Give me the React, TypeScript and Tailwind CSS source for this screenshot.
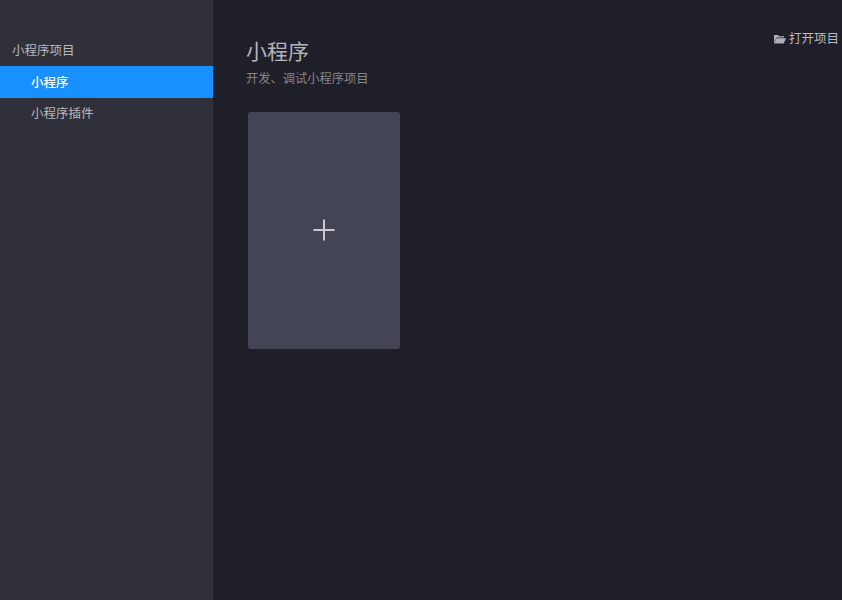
const fontStack = "font-['Liberation_Sans','Noto_Sans_CJK_SC',sans-serif]";

function FolderIcon() {
  return (
    <svg className="w-3 h-3 mr-[3px]" viewBox="0 0 12 12" fill="#b0b0b8">
      <path d="M0 2h4l1 1.200h5v1.300h-7.500l-2.500 5.500z" />
      <path d="M2.500 5.300h9.500l-2.300 5.200h-9.700z" />
    </svg>
  );
}

function App() {
  return (
    <div className={`flex w-[842px] h-[600px] overflow-hidden bg-[#1f1f29] ${fontStack}`}>
      <aside className="w-[213px] h-full shrink-0 bg-[#30303b] pt-[35px]">
        <div className="h-[31px] pl-3 pt-[2px] flex items-center text-[12.500px] text-[#b8b8bd]">小程序项目</div>
        <div className="h-8 pl-[31px] pt-[2px] flex items-center text-[12.500px] font-medium text-white bg-[#1890ff]">小程序</div>
        <div className="h-8 pl-[31px] flex items-center text-[12.500px] text-[#b8b8bd]">小程序插件</div>
      </aside>
      <main className="relative flex-1 pl-[33px] pt-[39px]">
        <button className="absolute top-[31px] right-[3px] flex items-center text-[12.500px] leading-4 text-[#b8b8be]">
          <FolderIcon />
          打开项目
        </button>
        <h1 className="text-[21px] leading-[26px] text-[#b4b4ba]">小程序</h1>
        <p className="mt-[2px] text-[12.250px] leading-6 text-[#85858c]">开发、调试小程序项目</p>
        <div className="mt-[21px] ml-[1.500px] w-[152.500px] h-[237px] rounded-[3px] bg-[#444457] flex items-center justify-center pb-[2px]">
          <svg className="w-[22px] h-[22px]" viewBox="0 0 22 22" stroke="#c8c8cf" strokeWidth="2" fill="none">
            <path d="M11 0.500v21M0.500 11h21" />
          </svg>
        </div>
      </main>
    </div>
  );
}

export default App;
